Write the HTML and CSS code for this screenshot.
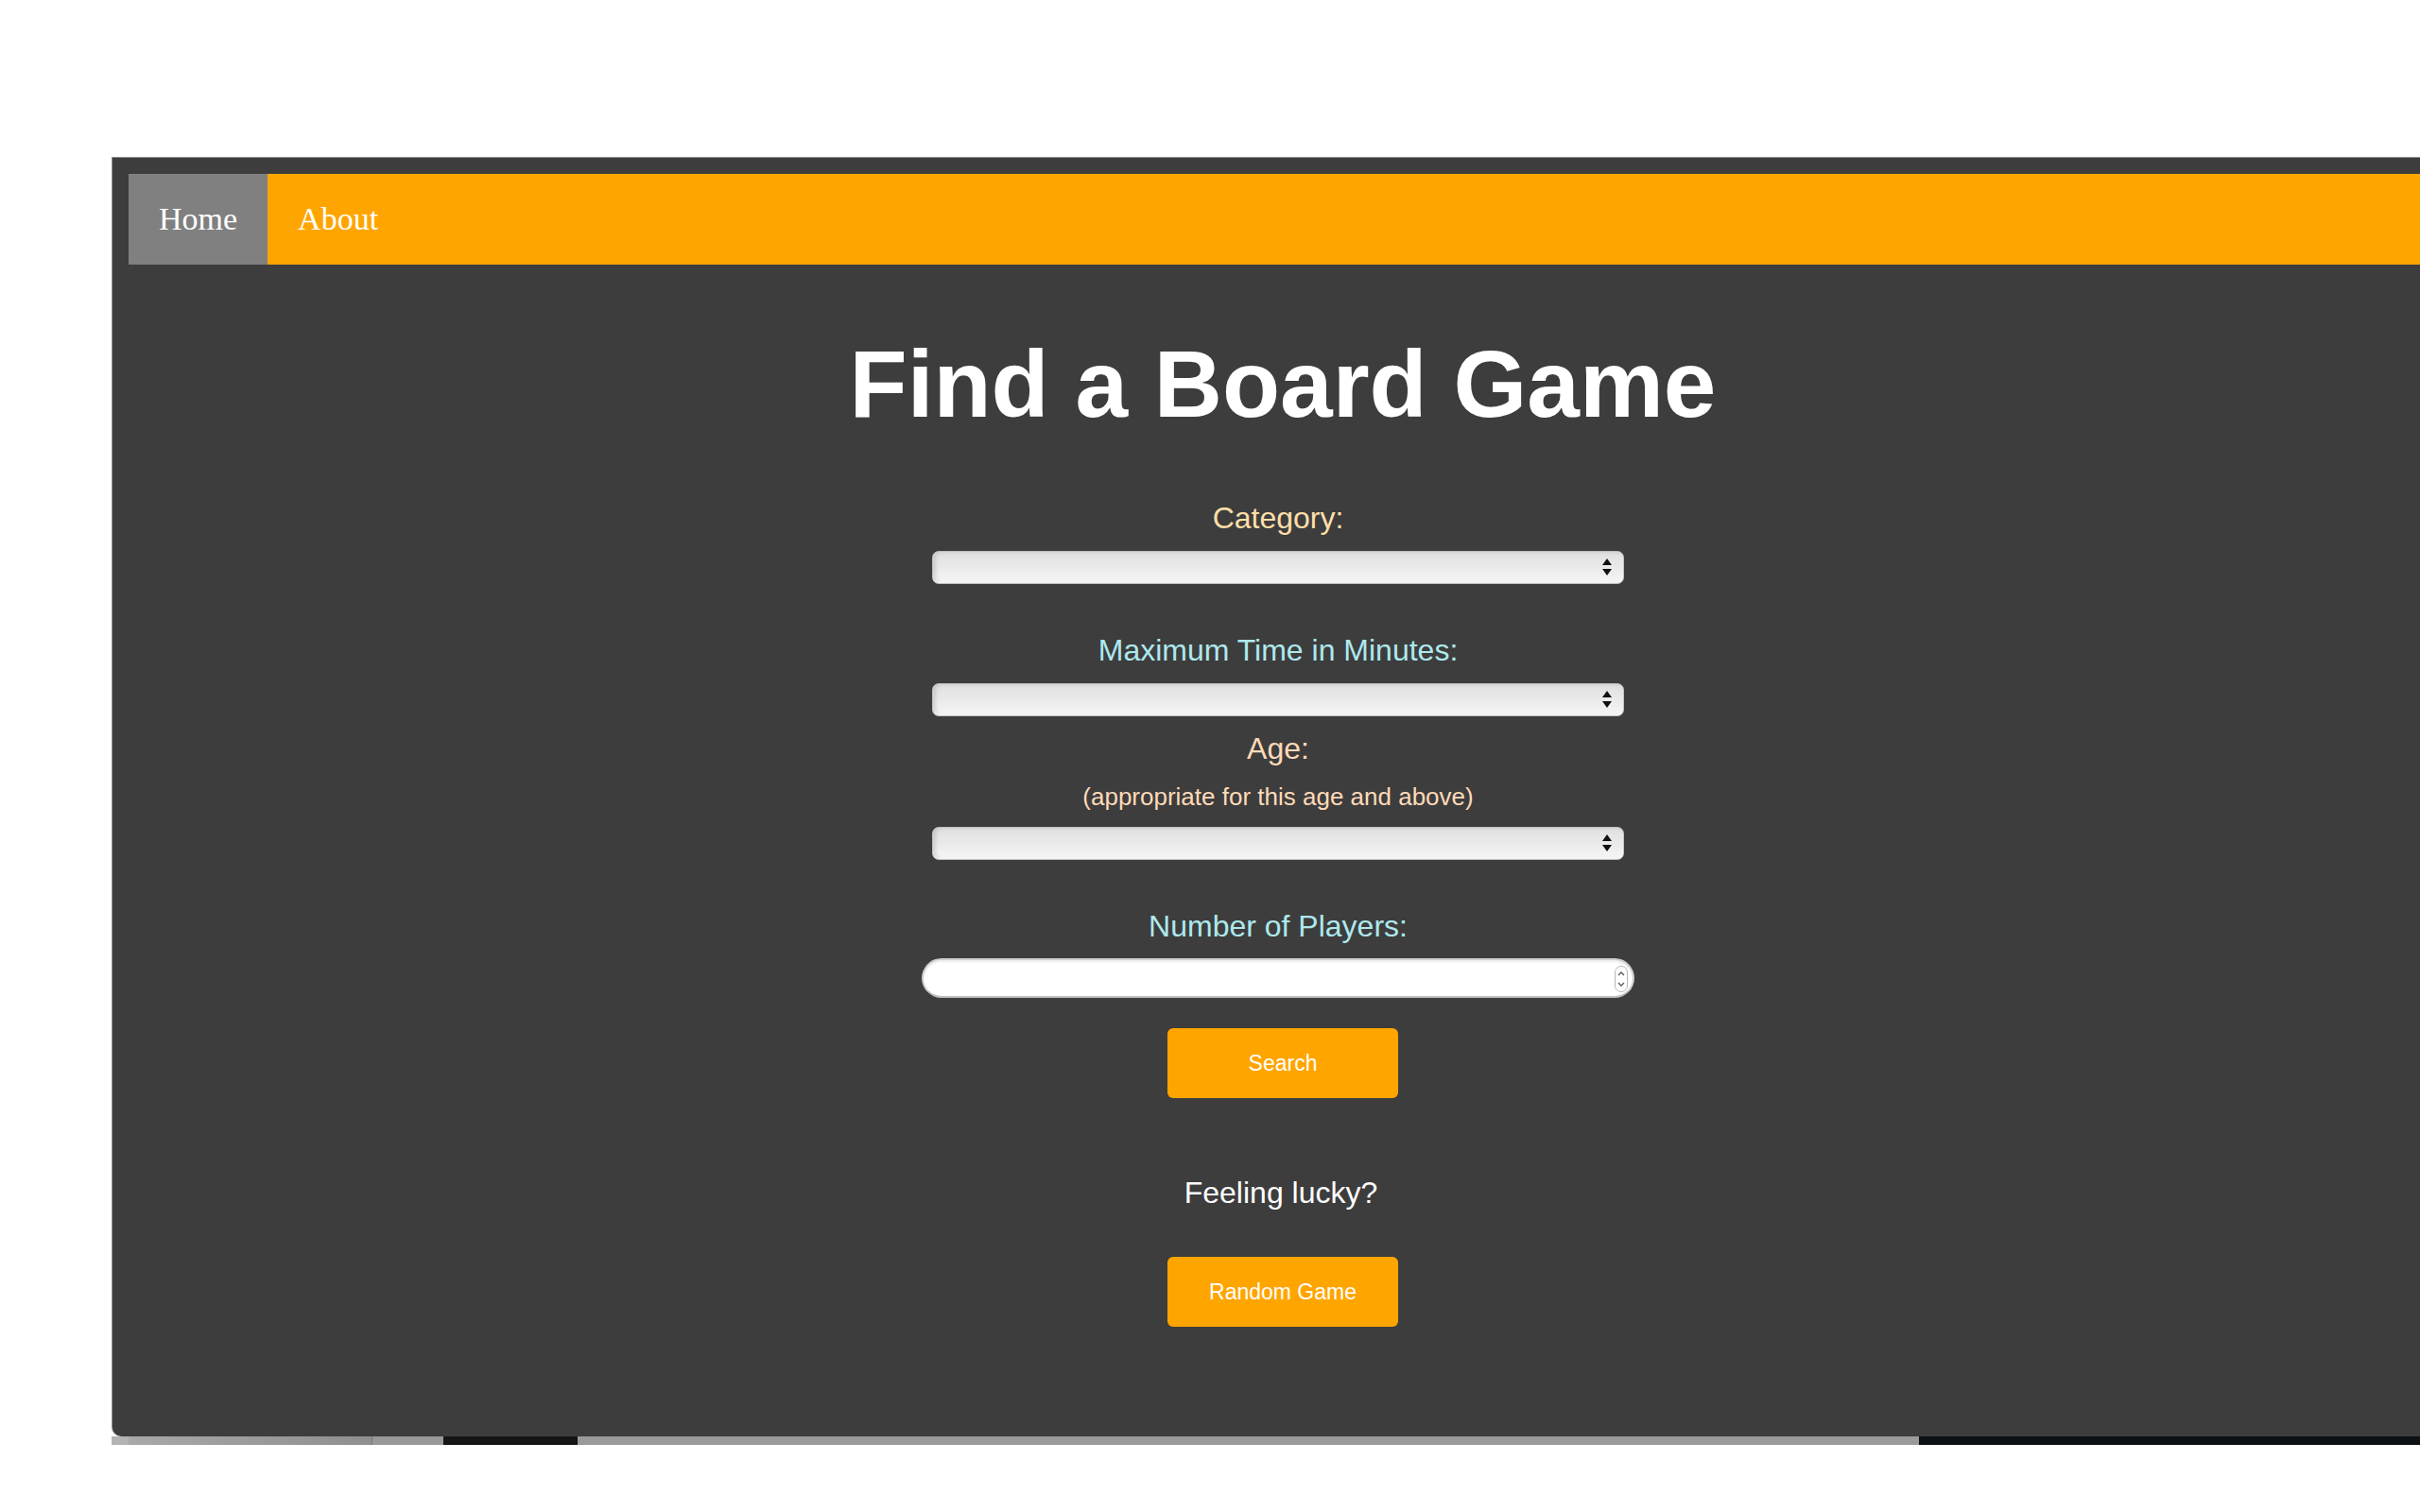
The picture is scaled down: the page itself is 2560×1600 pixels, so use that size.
FILE: index.html
```html
<!DOCTYPE html>
<html lang="en">
<head>
<meta charset="utf-8">
<title>Find a Board Game</title>
<link rel="stylesheet" href="styles.css">
</head>
<body>
<div class="desktop">
  <div class="window">
    <nav class="nav">
      <a class="nav-link nav-link-active" href="#">Home</a>
      <a class="nav-link" href="#">About</a>
    </nav>
    <main class="finder">
      <h1 class="title">Find a Board Game</h1>

      <label class="label label-cream label-first">Category:</label>
      <div class="select-wrap">
        <select class="select"></select>
        <svg class="select-arrows" width="10" height="18" viewBox="0 0 10 18"><polygon points="5,0 10,7 0,7" fill="#111"/><polygon points="0,11 10,11 5,18" fill="#111"/></svg>
      </div>

      <label class="label label-cyan label-gap">Maximum Time in Minutes:</label>
      <div class="select-wrap">
        <select class="select"></select>
        <svg class="select-arrows" width="10" height="18" viewBox="0 0 10 18"><polygon points="5,0 10,7 0,7" fill="#111"/><polygon points="0,11 10,11 5,18" fill="#111"/></svg>
      </div>

      <label class="label label-peach label-age">Age:</label>
      <p class="sublabel">(appropriate for this age and above)</p>
      <div class="select-wrap select-wrap-age">
        <select class="select"></select>
        <svg class="select-arrows" width="10" height="18" viewBox="0 0 10 18"><polygon points="5,0 10,7 0,7" fill="#111"/><polygon points="0,11 10,11 5,18" fill="#111"/></svg>
      </div>

      <label class="label label-cyan label-gap">Number of Players:</label>
      <div class="number-wrap">
        <input class="number" type="text">
        <svg class="spinner" width="14" height="28" viewBox="0 0 14 28"><rect x="0.5" y="0.5" width="13" height="27" rx="6.5" fill="#fff" stroke="#b5b5b5"/><polyline points="4,10 7,7 10,10" fill="none" stroke="#555" stroke-width="1.3"/><polyline points="4,18 7,21 10,18" fill="none" stroke="#555" stroke-width="1.3"/></svg>
      </div>

      <button class="btn btn-search" type="button">Search</button>

      <p class="lucky">Feeling lucky?</p>
      <button class="btn btn-random" type="button">Random Game</button>
    </main>
  </div>
  <div class="strip">
    <div class="strip-a"></div>
    <div class="strip-b"></div>
    <div class="strip-c"></div>
    <div class="strip-d"></div>
    <div class="strip-e"></div>
    <div class="strip-f"></div>
  </div>
</div>
</body>
</html>
```

FILE: styles.css
```css
html, body {
  margin: 0;
  padding: 0;
  overflow: hidden;
  background: #ffffff;
}

.desktop {
  padding: 166px 0 0 118px;
  width: 2450px;
}

.window {
  box-sizing: border-box;
  width: 2450px;
  height: 1354px;
  padding: 17px 0 0 17px;
  background: #3d3d3d;
  border-top: 1px solid #8e8e8e;
  border-left: 1px solid #8e8e8e;
  border-bottom-left-radius: 10px;
  display: flex;
  flex-direction: column;
}

.nav {
  display: flex;
  height: 96px;
  background: #ffa500;
}

.nav-link {
  display: block;
  padding: 0 32px;
  line-height: 96px;
  font-family: "Liberation Serif", "Times New Roman", serif;
  font-size: 34px;
  color: #ffffff;
  text-decoration: none;
}

.nav-link-active {
  background: #808080;
}

.finder {
  display: flex;
  flex-direction: column;
  align-items: center;
  font-family: "Liberation Sans", Arial, sans-serif;
}

.title {
  margin: 68px 0 0 10px;
  font-size: 100px;
  line-height: 116px;
  font-weight: bold;
  color: #ffffff;
}

.label {
  display: block;
  font-size: 32px;
  line-height: 37px;
  margin: 52px 0 0;
}

.label-first {
  margin-top: 66px;
}

.label-age {
  margin-top: 16px;
}

.label-cream {
  color: #ffdfa9;
}

.label-peach {
  color: #ffdab9;
}

.label-cyan {
  color: #aee8ee;
}

.sublabel {
  margin: 17px 0 0;
  font-size: 26px;
  line-height: 30px;
  color: #ffdab9;
}

.select-wrap {
  position: relative;
  width: 732px;
  height: 35px;
  margin-top: 16px;
}

.select-wrap-age {
  margin-top: 17px;
}

.select {
  -webkit-appearance: none;
  appearance: none;
  box-sizing: border-box;
  width: 100%;
  height: 100%;
  margin: 0;
  border: 1px solid #c2c2c2;
  border-radius: 7px;
  background: linear-gradient(to bottom, #e0e0e0 0%, #e9e9e9 45%, #f6f6f6 100%);
  box-shadow: inset 3px 0 4px rgba(0, 0, 0, 0.12), inset 0 -2px 1px rgba(255, 255, 255, 0.9);
}

.select-arrows {
  position: absolute;
  right: 13px;
  top: 8px;
}

.number-wrap {
  position: relative;
  width: 754px;
  height: 42px;
  margin-top: 15px;
}

.number {
  box-sizing: border-box;
  width: 100%;
  height: 100%;
  margin: 0;
  border: 2px solid #cfcfcf;
  border-bottom-color: #bdbdbd;
  border-radius: 21px;
  background: #ffffff;
  box-shadow: inset 0 2px 2px rgba(0, 0, 0, 0.08);
}

.spinner {
  position: absolute;
  right: 7px;
  top: 8px;
}

.btn {
  width: 244px;
  height: 74px;
  margin-left: 10px;
  border: none;
  border-radius: 6px;
  background: #ffa500;
  color: #ffffff;
  font-family: "Liberation Sans", Arial, sans-serif;
  font-size: 23px;
  padding: 0;
}

.btn-search {
  margin-top: 32px;
}

.lucky {
  margin: 82px 0 0 6px;
  font-size: 32px;
  line-height: 37px;
  color: #ffffff;
}

.btn-random {
  margin-top: 49px;
}

.strip {
  display: flex;
  height: 9px;
}

.strip-a {
  width: 18px;
  background: #b3b3b3;
}

.strip-b {
  width: 257px;
  background: linear-gradient(to right, #a8a8a8, #8f8f8f);
  border-right: 1px solid #7a7a7a;
}

.strip-c {
  width: 75px;
  background: #989898;
}

.strip-d {
  width: 142px;
  background: #151515;
}

.strip-e {
  width: 1419px;
  background: #9a9a9a;
}

.strip-f {
  flex: 1;
  background: #0b1115;
}
```
